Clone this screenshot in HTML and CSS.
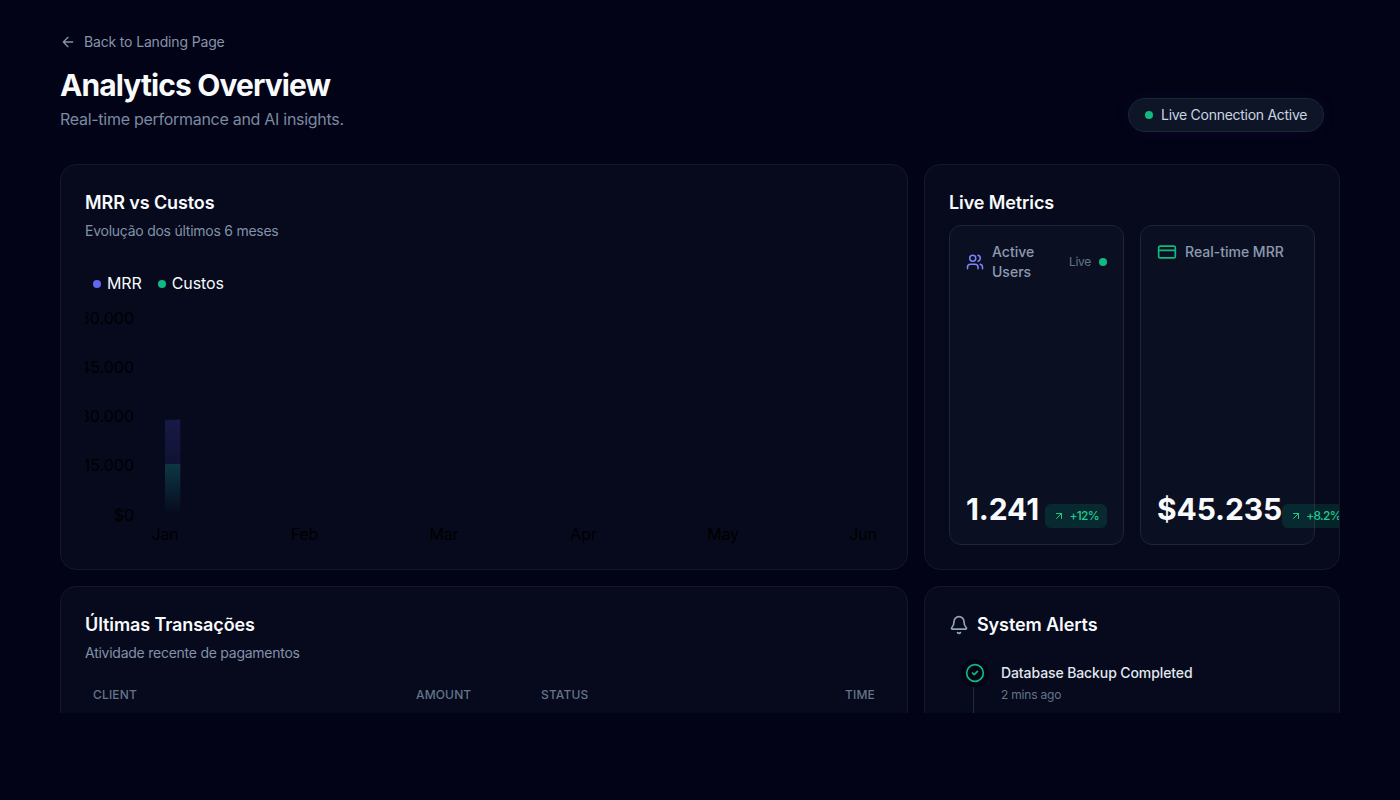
FILE: index.html
```html
<!DOCTYPE html>
<html lang="pt-BR">
<head>
    <meta charset="UTF-8">
    <meta name="viewport" content="width=device-width, initial-scale=1.0">
    <title>Analytics Overview</title>
    <link rel="stylesheet" href="styles.css">
</head>
<body>
    <main class="container">
        <header class="page-header">
            <div>
                <a class="back-link" href="#">
                    <svg class="icon" width="16" height="16" viewBox="0 0 24 24"><path d="m12 19-7-7 7-7M19 12H5"/></svg>
                    <span>Back to Landing Page</span>
                </a>
                <h1>Analytics Overview</h1>
                <p class="tagline">Real-time performance and AI insights.</p>
            </div>
            <div class="status-pill"><span class="dot green"></span><span>Live Connection Active</span></div>
        </header>

        <div class="grid">
            <section class="card">
                <h2>MRR vs Custos</h2>
                <p class="subtitle">Evolução dos últimos 6 meses</p>
                <div class="legend">
                    <span class="legend-item"><span class="dot indigo"></span><span>MRR</span></span>
                    <span class="legend-item"><span class="dot green"></span><span>Custos</span></span>
                </div>
                <svg class="chart" width="798" height="249" viewBox="0 0 798 249">
                    <defs>
                        <linearGradient id="mrr" x1="0" y1="0" x2="0" y2="1">
                            <stop offset="0" stop-color="#6054f1" stop-opacity="0.2"/>
                            <stop offset="1" stop-color="#6054f1" stop-opacity="0"/>
                        </linearGradient>
                        <linearGradient id="custos" x1="0" y1="0" x2="0" y2="1">
                            <stop offset="0" stop-color="#00b981" stop-opacity="0.22"/>
                            <stop offset="1" stop-color="#00b981" stop-opacity="0"/>
                        </linearGradient>
                    </defs>
                    <path d="M80 124 L95.300 123.500 V218 H80Z" fill="url(#mrr)"/>
                    <path d="M80 168.300 L95.300 167.800 V218 H80Z" fill="url(#custos)"/>
                    <g class="y-axis">
                        <text x="49" y="28">$60.000</text>
                        <text x="49" y="77">$45.000</text>
                        <text x="49" y="126">$30.000</text>
                        <text x="49" y="175">$15.000</text>
                        <text x="49" y="225">$0</text>
                    </g>
                    <g class="x-axis">
                        <text x="80" y="244">Jan</text>
                        <text x="219.500" y="244">Feb</text>
                        <text x="359" y="244">Mar</text>
                        <text x="498.500" y="244">Apr</text>
                        <text x="638" y="244">May</text>
                        <text x="778" y="244">Jun</text>
                    </g>
                </svg>
            </section>

            <section class="card">
                <h2>Live Metrics</h2>
                <div class="metrics">
                    <div class="metric">
                        <div class="metric-head">
                            <svg class="icon indigo-icon" width="18" height="20" viewBox="0 0 24 24"><path d="M16 21v-2a4 4 0 0 0-4-4H6a4 4 0 0 0-4 4v2M22 21v-2a4 4 0 0 0-3-3.870M16 3.130a4 4 0 0 1 0 7.750"/><circle cx="9" cy="7" r="4"/></svg>
                            <span class="metric-label">Active<br>Users</span>
                            <span class="live"><span>Live</span><span class="dot green"></span></span>
                        </div>
                        <div class="metric-foot">
                            <span class="value">1.241</span>
                            <span class="badge"><svg class="icon" width="12" height="12" viewBox="0 0 24 24"><path d="M7 7h10v10M7 17 17 7"/></svg><span>+12%</span></span>
                        </div>
                    </div>
                    <div class="metric">
                        <div class="metric-head">
                            <svg class="icon green-icon" width="20" height="20" viewBox="0 0 24 24"><rect x="2" y="5" width="20" height="14" rx="2"/><path d="M2 10h20"/></svg>
                            <span class="metric-label">Real-time MRR</span>
                        </div>
                        <div class="metric-foot">
                            <span class="value">$45.235</span>
                            <span class="badge"><svg class="icon" width="12" height="12" viewBox="0 0 24 24"><path d="M7 7h10v10M7 17 17 7"/></svg><span>+8.2%</span></span>
                        </div>
                    </div>
                </div>
            </section>

            <section class="card">
                <h2>Últimas Transações</h2>
                <p class="subtitle">Atividade recente de pagamentos</p>
                <table>
                    <thead>
                        <tr><th class="col-client">Client</th><th class="col-amount">Amount</th><th class="col-status">Status</th><th class="col-time">Time</th></tr>
                    </thead>
                </table>
            </section>

            <section class="card">
                <h2 class="with-icon">
                    <svg class="icon bell" width="20" height="20" viewBox="0 0 24 24"><path d="M10.268 21a2 2 0 0 0 3.464 0M3.262 15.326A1 1 0 0 0 4 17h16a1 1 0 0 0 .740-1.673C19.410 13.956 18 12.499 18 8A6 6 0 0 0 6 8c0 4.499-1.411 5.956-2.738 7.326"/></svg>
                    <span>System Alerts</span>
                </h2>
                <div class="alert">
                    <div class="rail">
                        <span class="alert-icon"><svg class="icon green-icon" width="20" height="20" viewBox="0 0 24 24"><circle cx="12" cy="12" r="10"/><path d="m9 12 2 2 4-4"/></svg></span>
                        <span class="rail-line"></span>
                    </div>
                    <div>
                        <p class="alert-title">Database Backup Completed</p>
                        <p class="alert-time">2 mins ago</p>
                    </div>
                </div>
            </section>
        </div>
    </main>
</body>
</html>
```
FILE: styles.css
```css
* {
    box-sizing: border-box;
}
body {
    margin: 0;
    background: #020316;
    color: #f8fafc;
    font-family: Inter, "Liberation Sans", sans-serif;
    font-size: 16px;
    line-height: 24px;
}
h1, h2, p {
    margin: 0;
}
.container {
    width: 1280px;
    height: 713px;
    margin: 0 auto;
    padding-top: 32px;
    overflow: hidden;
}
.icon {
    display: block;
    flex-shrink: 0;
    fill: none;
    stroke: currentColor;
    stroke-width: 2;
    stroke-linecap: round;
    stroke-linejoin: round;
}
.dot {
    flex-shrink: 0;
    width: 8px;
    height: 8px;
    border-radius: 50%;
}
.green {
    background: #10b981;
}
.indigo {
    background: #6366f1;
}
.green-icon {
    color: #10b981;
}
.indigo-icon {
    color: #7c86ff;
}

/* header */
.page-header {
    display: flex;
    justify-content: space-between;
    align-items: flex-end;
    height: 100px;
    padding-right: 16px;
    margin-bottom: 32px;
}
.back-link {
    display: flex;
    align-items: center;
    gap: 8px;
    margin-bottom: 15px;
    color: #8793aa;
    font-size: 14px;
    line-height: 20px;
    letter-spacing: -0.16px;
    text-decoration: none;
}
h1 {
    margin-bottom: 4px;
    font-size: 30px;
    line-height: 36px;
    font-weight: 700;
    letter-spacing: -0.9px;
}
.tagline {
    margin-bottom: 1px;
    color: #7c89a2;
    letter-spacing: -0.28px;
}
.status-pill {
    display: flex;
    align-items: center;
    gap: 8px;
    width: 196px;
    height: 34px;
    padding: 0 16px;
    border: 1px solid #1a2535;
    border-radius: 17px;
    background: #0d1527;
    box-shadow: 0 0 15px rgba(99, 102, 241, 0.08);
    color: #cbd5e1;
    font-size: 14px;
    letter-spacing: -0.28px;
    white-space: nowrap;
}

/* cards */
.grid {
    display: grid;
    grid-template-columns: 848px 416px;
    grid-auto-rows: 406px;
    gap: 16px;
}
.card {
    padding: 24px;
    overflow: hidden;
    border: 1px solid #141828;
    border-radius: 16px;
    background: #060a1c;
}
h2 {
    font-size: 18px;
    line-height: 28px;
    font-weight: 600;
    letter-spacing: -0.1px;
}
.subtitle {
    margin-top: 4px;
    color: #8391a9;
    font-size: 14px;
    line-height: 20px;
    letter-spacing: -0.25px;
}
.legend {
    display: flex;
    gap: 16px;
    margin-top: 30px;
    margin-bottom: 1px;
    padding-left: 8px;
}
.legend-item {
    display: flex;
    align-items: center;
    gap: 6px;
    letter-spacing: -0.1px;
}
.legend-item .dot {
    margin-top: 2px;
}
.chart {
    display: block;
    font-size: 16px;
}
.y-axis {
    text-anchor: end;
}
.x-axis {
    text-anchor: middle;
    letter-spacing: -0.2px;
}

/* live metrics */
.metrics {
    display: grid;
    grid-template-columns: 1fr 1fr;
    gap: 16px;
    height: 320px;
    margin-top: 8px;
}
.metric {
    display: flex;
    flex-direction: column;
    justify-content: space-between;
    min-width: 0;
    padding: 16px;
    border: 1px solid #1e2536;
    border-radius: 12px;
    background: #0a1022;
}
.metric-head {
    display: flex;
    align-items: center;
    gap: 8px;
}
.metric-label {
    color: #8d9ab0;
    font-size: 14px;
    line-height: 20px;
    font-weight: 500;
    white-space: nowrap;
}
.live {
    display: flex;
    align-items: center;
    gap: 8px;
    margin-left: auto;
    color: #64748b;
    font-size: 12px;
    letter-spacing: -0.3px;
}
.metric-foot {
    display: flex;
    justify-content: space-between;
    align-items: flex-end;
}
.value {
    padding-bottom: 1px;
    font-size: 30px;
    line-height: 36px;
    font-weight: 700;
    letter-spacing: -0.1px;
}
.badge {
    display: flex;
    flex-shrink: 0;
    align-items: center;
    gap: 4px;
    height: 24px;
    padding: 0 8px;
    border-radius: 6px;
    background: rgba(0, 188, 125, 0.15);
    color: #1fc98f;
    font-size: 12px;
    font-weight: 500;
    letter-spacing: -0.7px;
}

/* transactions */
table {
    width: 798px;
    margin-top: 17px;
    border-collapse: collapse;
    table-layout: fixed;
}
th {
    padding: 7px 8px;
    color: #64748b;
    font-size: 12px;
    line-height: 16px;
    font-weight: 500;
    letter-spacing: 0.15px;
    text-align: left;
    text-transform: uppercase;
}
.col-client {
    width: 323px;
}
.col-amount {
    width: 125px;
}
.col-status {
    width: 180px;
}
th.col-time {
    text-align: right;
}

/* alerts */
.with-icon {
    display: flex;
    align-items: center;
    gap: 8px;
}
.bell {
    color: #94a3b8;
}
.alert {
    display: flex;
    gap: 12px;
    height: 100px;
    margin-top: 20px;
    padding-left: 12px;
}
.rail {
    display: flex;
    flex-direction: column;
    width: 28px;
}
.alert-icon {
    padding: 4px;
    border-radius: 50%;
    background: #020314;
}
.rail-line {
    flex: 1;
    width: 1px;
    margin-left: 12px;
    background: #252b3b;
}
.alert-title {
    margin-top: 4px;
    color: #e2e8f0;
    font-size: 14px;
    line-height: 20px;
    font-weight: 500;
    letter-spacing: -0.1px;
}
.alert-time {
    margin-top: 4px;
    color: #64748b;
    font-size: 12px;
    line-height: 16px;
    letter-spacing: -0.2px;
}
```
